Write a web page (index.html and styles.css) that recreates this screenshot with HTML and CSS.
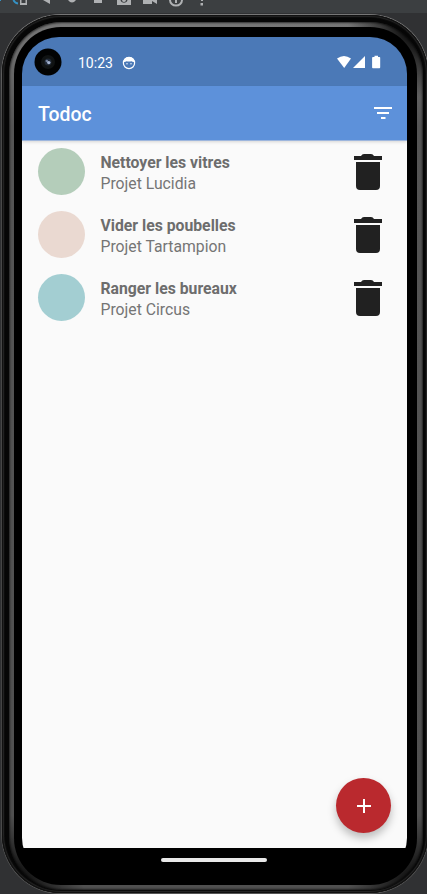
FILE: index.html
```html
<!DOCTYPE html>
<html lang="fr">
<head>
<meta charset="utf-8">
<title>Todoc</title>
<link rel="stylesheet" href="styles.css">
</head>
<body>
<svg class="toolbar" viewBox="0 0 427 13" aria-hidden="true">
  <path d="M0 0h1v1H0z" fill="#3592c4"/>
  <path d="M13.500 0q1 3 4.500 3.500" fill="none" stroke="#3592c4" stroke-width="2"/>
  <path d="M20 0v5h7V0h-1.500v3h-4V0z" fill="#afb1b3"/>
  <path d="M43 0l7 4V0zM68 0q4 5 8 0zM94 0h8v3h-8z" fill="#afb1b3"/>
  <path d="M117 0v5h14V0h-3.500a3.600 3.600 0 0 1-7 0zM122 0a2 2 0 0 0 4 0z" fill="#afb1b3"/>
  <path d="M143 0v4h9V1l5 3V0z" fill="#afb1b3"/>
  <path d="M170 0a6 5.500 0 0 0 12 0M176 0v3" fill="none" stroke="#afb1b3" stroke-width="2"/>
  <path d="M201 0h2v1h-2zM200.500 3h2.500v2.500h-2.500z" fill="#afb1b3"/>
</svg>
<main class="stage">
  <div class="phone">
    <div class="edge">
      <div class="rim">
        <div class="bezel">
          <div class="screen">
            <div class="status">
              <svg class="camera" viewBox="0 0 28 28">
                <circle cx="14" cy="14" r="13.500" fill="#020303"/>
                <circle cx="14" cy="14" r="7" fill="#101313"/>
                <circle cx="14" cy="14" r="3.500" fill="#202936"/>
                <circle cx="12.800" cy="13" r="1.300" fill="#6d7c98"/>
                <circle cx="14.800" cy="14.600" r="1.700" fill="#a2b2d0"/>
              </svg>
              <span class="time">10:23</span>
              <svg class="face" viewBox="0 0 14 14">
                <circle cx="7" cy="7" r="5.600" fill="none" stroke="#fff" stroke-width="1.200"/>
                <path d="M1.500 6Q2 1 7 1t5.500 5Q10.500 6.200 9.500 5.300 7 5.800 4.500 5.300 3.500 6.200 1.500 6z" fill="#fff"/>
                <circle cx="5" cy="7.800" r=".7" fill="#fff"/>
                <circle cx="9" cy="7.800" r=".7" fill="#fff"/>
              </svg>
              <svg class="signals" viewBox="0 0 44 14">
                <path d="M0 3.500Q7-1.500 14 3.500L7.200 13z" fill="#fff"/>
                <path d="M28 1v12H16z" fill="#fff"/>
                <path d="M36 2h1.500V.8h3.500V2h1.500q.7 0 .7.800v9.500q0 .9-.8.900h-6.500q-.8 0-.8-.9V2.800q0-.8.900-.8z" fill="#fff"/>
              </svg>
            </div>
            <header class="appbar">
              <h1>Todoc</h1>
              <svg class="filter" viewBox="0 0 18 12"><path d="M0 0h18v2H0zM3 5h12v2H3zM7 10h4.500v2H7z" fill="#fff"/></svg>
            </header>
            <section class="content">
              <ul class="tasks">
                <li class="task">
                  <span class="dot lucidia"></span>
                  <div class="text"><strong>Nettoyer les vitres</strong><span>Projet Lucidia</span></div>
                  <svg class="trash" viewBox="0 0 28 36"><path d="M0 2h7q1-2 3-2h7q2 0 3 2h8v4H0zM2 8h24v24q0 4-4 4H6q-4 0-4-4z"/></svg>
                </li>
                <li class="task">
                  <span class="dot tartampion"></span>
                  <div class="text"><strong>Vider les poubelles</strong><span>Projet Tartampion</span></div>
                  <svg class="trash" viewBox="0 0 28 36"><path d="M0 2h7q1-2 3-2h7q2 0 3 2h8v4H0zM2 8h24v24q0 4-4 4H6q-4 0-4-4z"/></svg>
                </li>
                <li class="task">
                  <span class="dot circus"></span>
                  <div class="text"><strong>Ranger les bureaux</strong><span>Projet Circus</span></div>
                  <svg class="trash" viewBox="0 0 28 36"><path d="M0 2h7q1-2 3-2h7q2 0 3 2h8v4H0zM2 8h24v24q0 4-4 4H6q-4 0-4-4z"/></svg>
                </li>
              </ul>
              <button class="fab" aria-label="Ajouter"><svg viewBox="0 0 14 14"><path d="M6 0h2v6h6v2H8v6H6V8H0V6h6z" fill="#fff"/></svg></button>
            </section>
            <nav class="navbar"><span class="handle"></span></nav>
          </div>
        </div>
      </div>
    </div>
  </div>
</main>
</body>
</html>
```

FILE: styles.css
```css
* {
  box-sizing: border-box;
}

body {
  margin: 0;
  width: 427px;
  height: 894px;
  overflow: hidden;
  background: #303133;
  font-family: Roboto, "Liberation Sans", sans-serif;
}

svg {
  display: block;
  flex: none;
}

.toolbar {
  width: 427px;
  height: 13px;
  background: #3c3f41;
}

.stage {
  height: 881px;
  padding: 1px 0 0 1px;
  overflow: hidden;
}

/* Device frame: nested rounded shells from the outer edge inwards. */
.phone {
  width: 428px;
  height: 880px;
  padding: 1px;
  border-radius: 60px;
  background: linear-gradient(#777, #4a4a4a 12%, #444 88%, #555);
}

.edge {
  height: 100%;
  padding: 7px 5px 3px 7px;
  border-radius: 59px;
  background: #060606;
  box-shadow: inset 0 0 0 1px #111, inset 0 0 0 2px #222, inset 0 0 0 3px #0c0c0c;
}

.rim {
  height: 100%;
  padding: 5px 6px 5px 5px;
  border-radius: 53px;
  background:
    radial-gradient(circle at 100% 0, rgba(0, 0, 0, .85) 20px, transparent 75px),
    radial-gradient(circle at 100% 100%, rgba(0, 0, 0, .75) 20px, transparent 75px),
    radial-gradient(circle at 0 100%, rgba(0, 0, 0, .75) 20px, transparent 75px),
    linear-gradient(#777, #555 12%, #505050 88%, #505050);
  box-shadow: inset 0 0 2px 1px rgba(0, 0, 0, .6);
}

.bezel {
  height: 100%;
  padding: 10px 9px 10px 8px;
  border-radius: 47px;
  background: #000;
}

.screen {
  display: flex;
  flex-direction: column;
  height: 838px;
  width: 385px;
  border-radius: 37px;
  overflow: hidden;
  background: #000;
}

.status {
  display: flex;
  align-items: center;
  flex: none;
  height: 49px;
  padding: 1px 26px 0 11.500px;
  background: #4b79b7;
  color: #fff;
}

.camera {
  width: 28px;
  height: 28px;
}

.time {
  width: 35px;
  margin: 1px 0 0 16.500px;
  font-size: 14px;
  line-height: 18px;
  white-space: nowrap;
}

.face {
  width: 14px;
  height: 14px;
  margin: 1px 0 0 9px;
}

.signals {
  width: 44px;
  height: 14px;
  margin-left: auto;
}

.appbar {
  display: flex;
  align-items: center;
  justify-content: space-between;
  flex: none;
  height: 54px;
  padding: 0 15px 0 16px;
  background: #5d91da;
  color: #fff;
  box-shadow: 0 1px 0 #9db6dd, 0 2px 3px rgba(0, 0, 0, .15);
  z-index: 1;
}

.appbar h1 {
  margin: 4px 0 0;
  font-size: 19.400px;
  font-weight: 500;
  line-height: 24px;
}

.filter {
  width: 18px;
  height: 12px;
}

.content {
  display: flex;
  flex-direction: column;
  justify-content: space-between;
  flex: none;
  height: 708px;
  padding-bottom: 15px;
  background: #fafafa;
}

.tasks {
  margin: 0;
  padding: 0;
  list-style: none;
}

.task {
  display: flex;
  align-items: center;
  height: 63px;
  padding: 0 25.500px 0 16px;
}

.dot {
  width: 47px;
  height: 47px;
  border-radius: 50%;
}

.lucidia {
  background: #b4cdba;
}

.tartampion {
  background: #ead9d1;
}

.circus {
  background: #a3ced2;
}

.text {
  display: flex;
  flex-direction: column;
  flex: 1;
  margin-left: 15.500px;
  padding-top: 2px;
  color: #757575;
  font-size: 15.750px;
  line-height: 21px;
}

.text strong {
  font-weight: 700;
  color: #6d6d6d;
}

.trash {
  width: 28px;
  height: 36px;
  fill: #212121;
}

.fab {
  display: grid;
  place-items: center;
  align-self: flex-end;
  width: 55px;
  height: 55px;
  margin-right: 16px;
  padding: 0;
  border: 0;
  border-radius: 50%;
  background: #ba292e;
  box-shadow: 0 5px 9px rgba(0, 0, 0, .25);
}

.fab svg {
  width: 14px;
  height: 14px;
}

.navbar {
  display: flex;
  justify-content: center;
  flex: 1;
  padding: 10px 1px 0 0;
  background: #000;
}

.handle {
  width: 106px;
  height: 4px;
  border-radius: 2px;
  background: #e8e8e8;
}
```
